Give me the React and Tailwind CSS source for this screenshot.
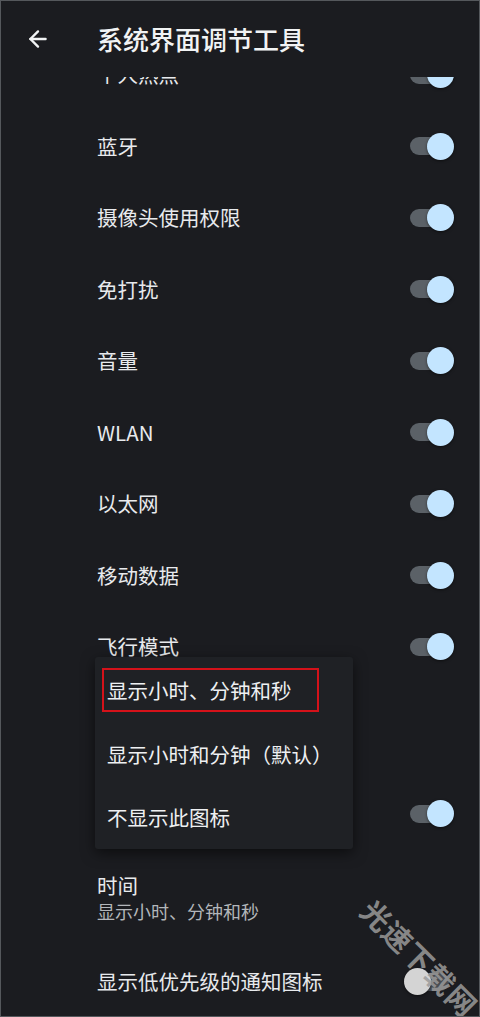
import React from "react";
import { ArrowLeft } from "lucide-react";

const font = { fontFamily: '"Noto Sans CJK SC", "Noto Sans", sans-serif' };

function Toggle({ on = true }) {
  return (
    <div className="relative w-[46px] h-[28px] shrink-0">
      <div className={`absolute left-[4px] right-[3px] top-[5px] h-[18px] rounded-full ${on ? "bg-[#5b6167]" : "bg-[#4a4d52]"}`} />
      <div className={`absolute top-[0.5px] w-[27px] h-[27px] rounded-full shadow-[0_1px_3px_rgba(0,0,0,0.5)] ${on ? "right-[-2px] bg-[#c3e5ff]" : "left-[-2px] bg-[#d4d4d4]"}`} />
    </div>
  );
}

function Row({ label, h = "h-[71.5px]", toggle = true }) {
  return (
    <div className={`${h} flex items-center pl-[96px] pr-[27px] shrink-0`}>
      <div className="flex-1 text-[20.5px] text-[#e8eaed]">{label}</div>
      {toggle && <Toggle />}
    </div>
  );
}

export default function App() {
  const rows = ["个人热点", "蓝牙", "摄像头使用权限", "免打扰", "音量", "WLAN", "以太网", "移动数据", "飞行模式"];
  return (
    <div className="relative w-[480px] h-[1017px] overflow-hidden bg-[#1b1c20] border border-[#55585c] flex flex-col" style={font}>
      <div className="h-[76px] shrink-0 flex items-center relative z-10 bg-[#1b1c20]">
        <div className="w-[96px] flex items-center pl-[24px]">
          <ArrowLeft size={26} strokeWidth={2.2} color="#f1f3f4" />
        </div>
        <div className="text-[26px] font-medium text-[#f1f3f4] leading-none pb-[1px]">系统界面调节工具</div>
      </div>
      <div className="flex-1 overflow-hidden">
        <div className="flex flex-col mt-[-38px]">
          {rows.map((r) => (
            <Row key={r} label={r} />
          ))}
          <div className="h-[95px] shrink-0" />
          <Row label="" h="h-[72px]" />
          <div className="h-[96px] shrink-0 flex flex-col justify-center pl-[96px]">
            <div className="text-[20.5px] text-[#e8eaed] leading-[26px]">时间</div>
            <div className="text-[18px] text-[#b3b6ba] leading-[26px]">显示小时、分钟和秒</div>
          </div>
          <div className="h-[72px] shrink-0 flex items-center pl-[96px] pr-[27px]">
            <div className="flex-1 text-[20.5px] text-[#e8eaed]">显示低优先级的通知图标</div>
            <Toggle on={false} />
          </div>
        </div>
      </div>

      {/* popup menu */}
      <div className="absolute left-[94px] top-[656px] w-[258px] h-[192px] bg-[#1f2125] rounded-[3px] shadow-[0_4px_14px_rgba(0,0,0,0.55)] pt-[2px] z-20">
        <div className="h-[63.5px] flex items-center pl-[12px] text-[20.5px] text-[#eef0f2]">显示小时、分钟和秒</div>
        <div className="h-[63.5px] flex items-center pl-[12px] text-[20.5px] text-[#eef0f2]">显示小时和分钟（默认）</div>
        <div className="h-[63.5px] flex items-center pl-[12px] text-[20.5px] text-[#eef0f2]">不显示此图标</div>
        <div className="absolute left-[7px] top-[11px] w-[217px] h-[44px] border-2 border-[#d4121a]" />
      </div>

      {/* watermark */}
      <div className="absolute left-[344px] top-[942px] w-[150px] text-center rotate-45 text-[29px] font-bold text-[#9a9a9a]/85 leading-none tracking-[1px] z-30 pointer-events-none">
        光速下载网
      </div>
    </div>
  );
}
